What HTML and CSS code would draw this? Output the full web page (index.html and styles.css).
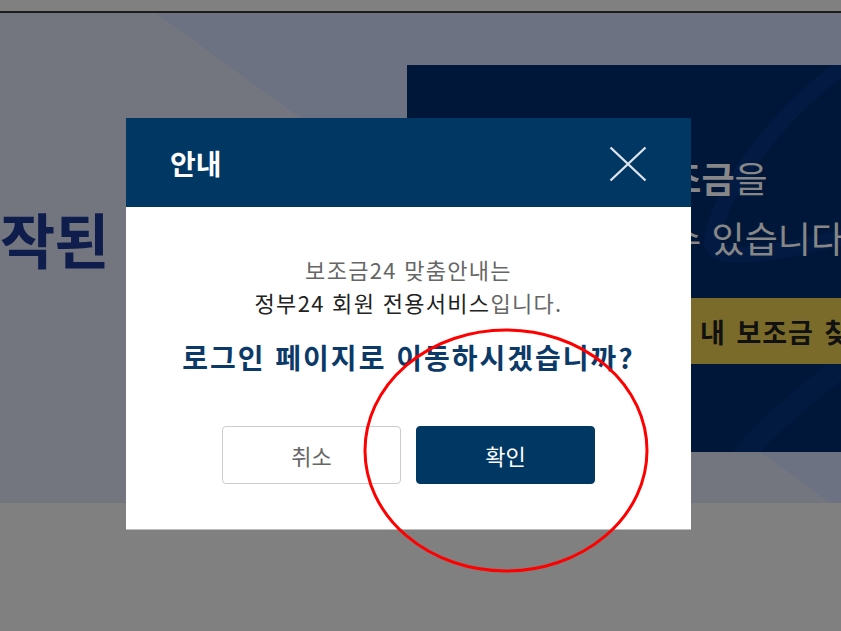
FILE: index.html
```html
<!DOCTYPE html>
<html lang="ko">
<head>
<meta charset="utf-8">
<title>안내</title>
<link rel="stylesheet" href="styles.css">
</head>
<body>
  <div class="topbar"></div>
  <section class="hero">
    <div class="hero-left">
      <h1 class="hero-title">작된</h1>
    </div>
    <div class="hero-right">
      <div class="panel">
        <svg class="swoosh" viewBox="0 0 434 387" width="434" height="387" aria-hidden="true">
          <path d="M 445 -5 C 373 45, 313 125, 305 175 C 301 197, 353 193, 445 170" fill="none" stroke="#031b42" stroke-width="16"/>
          <path d="M 440 296 C 400 330, 360 360, 335 392" fill="none" stroke="#021a40" stroke-width="22"/>
        </svg>
        <p class="panel-line">내 <b>보조금</b>을</p>
        <p class="panel-line">받을 수 있습니다</p>
        <div class="panel-btn">내 보조금 찾기</div>
      </div>
    </div>
  </section>
  <div class="bottom"></div>

  <div class="modal">
    <div class="modal-head">
      <h2 class="modal-title">안내</h2>
      <button class="modal-close" type="button" aria-label="닫기">
        <svg viewBox="0 0 38 36" width="38" height="36"><path d="M1.5 1.5 L36.5 34.5 M36.5 1.5 L1.5 34.5" stroke="#dde4ec" stroke-width="2.4" fill="none"/></svg>
      </button>
    </div>
    <div class="modal-body">
      <p class="msg msg-sub">보조금24 맞춤안내는</p>
      <p class="msg"><span class="msg-strong">정부24 회원 전용서비스</span>입니다.</p>
      <p class="question">로그인 페이지로 이동하시겠습니까?</p>
      <div class="actions">
        <button class="btn btn-cancel" type="button">취소</button>
        <button class="btn btn-ok" type="button">확인</button>
      </div>
    </div>
  </div>

  <svg class="annot" viewBox="0 0 841 631" width="841" height="631" aria-hidden="true">
    <ellipse cx="506" cy="450.5" rx="141" ry="120.5" fill="none" stroke="#ff0000" stroke-width="3"/>
  </svg>
</body>
</html>
```

FILE: styles.css
```css
* {
  box-sizing: border-box;
  margin: 0;
  padding: 0;
}

html, body {
  width: 841px;
  height: 631px;
  overflow: hidden;
}

body {
  background: #808080;
  font-family: "Noto Sans CJK KR", "Noto Sans", sans-serif;
  position: relative;
  display: flex;
  flex-direction: column;
}

.topbar {
  height: 13px;
  flex: none;
  background: #808080;
  border-bottom: 2px solid #1c1c1c;
}

.hero {
  height: 490px;
  flex: none;
  display: flex;
  background: linear-gradient(36deg, #73767f 488px, #6c7281 488px);
}

.hero-left {
  width: 407px;
  flex: none;
  padding-top: 195px;
}

.hero-title {
  font-size: 60px;
  font-weight: 700;
  line-height: 1;
  color: #0f1d4d;
  white-space: nowrap;
  letter-spacing: -1px;
}

.hero-right {
  flex: 1;
  min-width: 0;
  padding-top: 52px;
}

.panel {
  height: 387px;
  background: #00173a;
  position: relative;
  overflow: hidden;
  padding: 82px 0 0 185px;
}

.swoosh {
  position: absolute;
  left: 0;
  top: 0;
}

.panel-line {
  position: relative;
  font-size: 36px;
  line-height: 60px;
  color: #878787;
  white-space: nowrap;
}

.panel-line b {
  font-weight: 700;
}

.panel-btn {
  position: relative;
  margin-top: 31px;
  margin-left: 2px;
  height: 66px;
  background: #7b6b2a;
  display: flex;
  align-items: center;
  padding-left: 106px;
  font-size: 27px;
  font-weight: 700;
  letter-spacing: 1px;
  word-spacing: 2px;
  color: #111111;
  white-space: nowrap;
}

.bottom {
  flex: 1;
}

.modal {
  position: absolute;
  left: 126px;
  top: 118px;
  width: 565px;
  height: 412px;
  background: #ffffff;
  border-bottom: 1px solid #bdbdbd;
}

.modal-head {
  height: 89px;
  background: #003763;
  display: flex;
  align-items: center;
  justify-content: space-between;
  padding: 0 44px;
}

.modal-title {
  font-size: 28px;
  font-weight: 700;
  color: #ffffff;
  line-height: 1;
}

.modal-close {
  border: 0;
  background: transparent;
  width: 38px;
  height: 36px;
  display: flex;
  margin-top: 2px;
}

.modal-body {
  text-align: center;
  padding-top: 46px;
}

.msg {
  font-size: 22px;
  line-height: 33px;
  color: #666666;
  letter-spacing: 1.3px;
}

.msg-strong {
  color: #222222;
}

.question {
  margin-top: 18px;
  font-size: 28px;
  line-height: 40px;
  font-weight: 700;
  color: #0b3a69;
  letter-spacing: 2px;
}

.actions {
  margin-top: 49px;
  display: flex;
  justify-content: center;
  gap: 15px;
}

.btn {
  width: 179px;
  height: 58px;
  border-radius: 4px;
  font-family: inherit;
  font-size: 22px;
}

.btn-cancel {
  background: #ffffff;
  border: 1px solid #cccccc;
  color: #666666;
}

.btn-ok {
  background: #003763;
  border: 1px solid #003763;
  color: #ffffff;
}

.annot {
  position: absolute;
  left: 0;
  top: 0;
  pointer-events: none;
}
```
